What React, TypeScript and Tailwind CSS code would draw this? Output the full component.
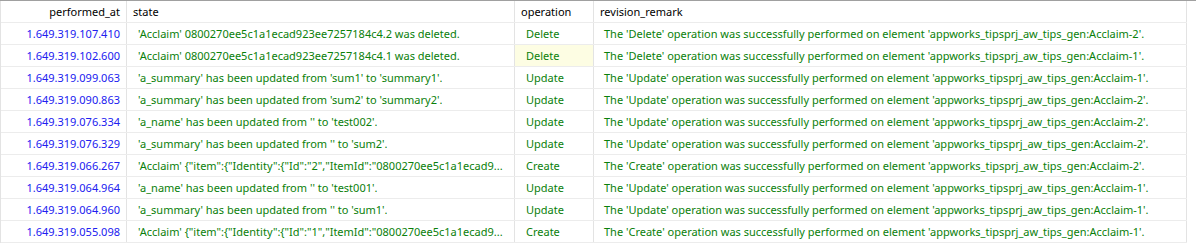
import React from "react";

interface Revision {
  performedAt: string;
  state: string;
  operation: string;
  remark: string;
  highlight?: boolean;
}

const rows: Revision[] = [
  {
    performedAt: "1.649.319.107.410",
    state: "'Acclaim' 0800270ee5c1a1ecad923ee7257184c4.2 was deleted.",
    operation: "Delete",
    remark: "The 'Delete' operation was successfully performed on element 'appworks_tipsprj_aw_tips_gen:Acclaim-2'.",
  },
  {
    performedAt: "1.649.319.102.600",
    state: "'Acclaim' 0800270ee5c1a1ecad923ee7257184c4.1 was deleted.",
    operation: "Delete",
    remark: "The 'Delete' operation was successfully performed on element 'appworks_tipsprj_aw_tips_gen:Acclaim-1'.",
    highlight: true,
  },
  {
    performedAt: "1.649.319.099.063",
    state: "'a_summary' has been updated from 'sum1' to 'summary1'.",
    operation: "Update",
    remark: "The 'Update' operation was successfully performed on element 'appworks_tipsprj_aw_tips_gen:Acclaim-1'.",
  },
  {
    performedAt: "1.649.319.090.863",
    state: "'a_summary' has been updated from 'sum2' to 'summary2'.",
    operation: "Update",
    remark: "The 'Update' operation was successfully performed on element 'appworks_tipsprj_aw_tips_gen:Acclaim-2'.",
  },
  {
    performedAt: "1.649.319.076.334",
    state: "'a_name' has been updated from '' to 'test002'.",
    operation: "Update",
    remark: "The 'Update' operation was successfully performed on element 'appworks_tipsprj_aw_tips_gen:Acclaim-2'.",
  },
  {
    performedAt: "1.649.319.076.329",
    state: "'a_summary' has been updated from '' to 'sum2'.",
    operation: "Update",
    remark: "The 'Update' operation was successfully performed on element 'appworks_tipsprj_aw_tips_gen:Acclaim-2'.",
  },
  {
    performedAt: "1.649.319.066.267",
    state: "'Acclaim' {\"item\":{\"Identity\":{\"Id\":\"2\",\"ItemId\":\"0800270ee5c1a1ecad9...",
    operation: "Create",
    remark: "The 'Create' operation was successfully performed on element 'appworks_tipsprj_aw_tips_gen:Acclaim-2'.",
  },
  {
    performedAt: "1.649.319.064.964",
    state: "'a_name' has been updated from '' to 'test001'.",
    operation: "Update",
    remark: "The 'Update' operation was successfully performed on element 'appworks_tipsprj_aw_tips_gen:Acclaim-1'.",
  },
  {
    performedAt: "1.649.319.064.960",
    state: "'a_summary' has been updated from '' to 'sum1'.",
    operation: "Update",
    remark: "The 'Update' operation was successfully performed on element 'appworks_tipsprj_aw_tips_gen:Acclaim-1'.",
  },
  {
    performedAt: "1.649.319.055.098",
    state: "'Acclaim' {\"item\":{\"Identity\":{\"Id\":\"1\",\"ItemId\":\"0800270ee5c1a1ecad9...",
    operation: "Create",
    remark: "The 'Create' operation was successfully performed on element 'appworks_tipsprj_aw_tips_gen:Acclaim-1'.",
  },
];

const cols = "grid grid-cols-[126px_388px_79px_593px]";

export default function App() {
  return (
    <div
      className="w-[1196px] h-[252px] bg-white border-t border-[#a0a0a0] text-[11px] leading-[16px]"
      style={{ fontFamily: "'Noto Sans', 'Open Sans', sans-serif" }}
    >
      <div className="w-[1187px] border-l border-[#e3e3e3]">
        {/* Header */}
        <div className={`${cols} h-[22px] border-b border-[#ececec]`}>
          <div className="flex items-center justify-end pr-[6px] pt-px border-r border-[#e3e3e3] text-black">
            performed_at
          </div>
          <div className="flex items-center pl-[6px] pt-px border-r border-[#e3e3e3] text-black">state</div>
          <div className="flex items-center pl-[6px] pt-px border-r border-[#e3e3e3] text-black">operation</div>
          <div className="flex items-center pl-[6px] pt-px border-r border-[#e3e3e3] text-black">revision_remark</div>
        </div>

        {/* Rows */}
        {rows.map((row) => (
          <div key={row.performedAt} className={`${cols} h-[22px] border-b border-[#ececec]`}>
            <div className="flex items-center justify-end pr-[6px] pt-px border-r border-[#e3e3e3] text-[#2020f0]">
              {row.performedAt}
            </div>
            <div className="flex items-center min-w-0 pl-[11px] pr-1 pt-px border-r border-[#e3e3e3] text-[#0a800a] overflow-hidden whitespace-nowrap">
              <span className="truncate min-w-0">{row.state}</span>
            </div>
            <div
              className={`flex items-center pl-[11px] pt-px border-r border-[#e3e3e3] text-[#0a800a] ${
                row.highlight ? "bg-[#fdfde3]" : ""
              }`}
            >
              {row.operation}
            </div>
            <div className="flex items-center min-w-0 pl-[10px] pt-px border-r border-[#e3e3e3] text-[#0a800a] whitespace-nowrap overflow-hidden">
              {row.remark}
            </div>
          </div>
        ))}
      </div>
    </div>
  );
}
